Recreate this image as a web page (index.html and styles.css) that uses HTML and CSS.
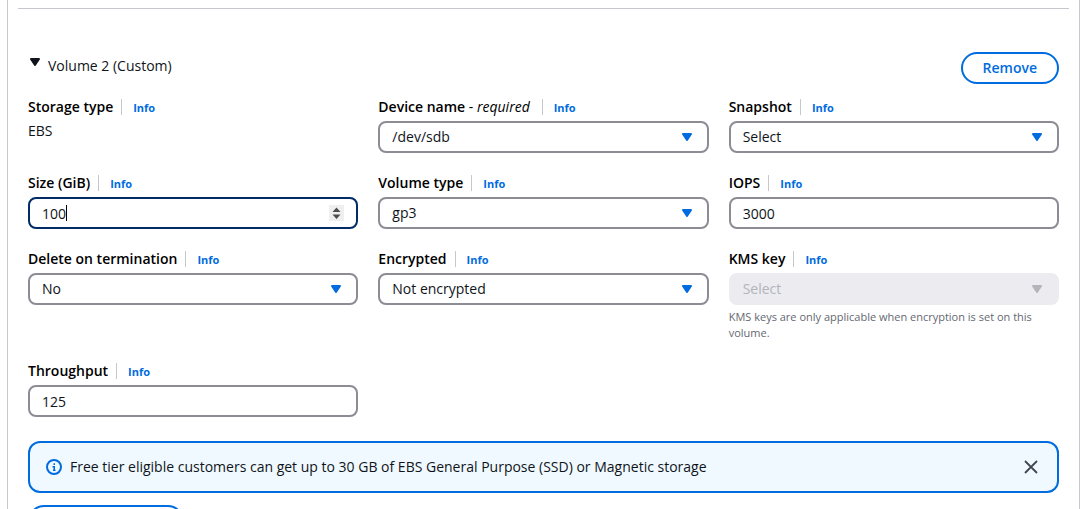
FILE: index.html
```
<!DOCTYPE html>
<html lang="en">
<head>
<meta charset="utf-8">
<meta name="viewport" content="width=device-width, initial-scale=1">
<title>Configure storage</title>
<link rel="stylesheet" href="styles.css">
</head>
<body>
<svg class="sprite" aria-hidden="true">
  <symbol id="caret-down" viewBox="0 0 10 8"><path d="M1 1h8L5 7z" fill="currentColor" stroke="currentColor" stroke-width="2" stroke-linejoin="round"/></symbol>
</svg>
<main class="panel">
  <hr class="rule">
  <section class="volume">
    <header class="volume-header">
      <button class="toggle" type="button" aria-expanded="true"><svg class="caret toggle-caret" aria-hidden="true"><use href="#caret-down"/></svg><span>Volume 2 (Custom)</span></button>
      <button class="pill" type="button">Remove</button>
    </header>
    <form class="grid">
      <div class="field">
        <div class="label-row"><span class="label">Storage type</span><a class="info" href="#">Info</a></div>
        <div class="value">EBS</div>
      </div>
      <div class="field">
        <div class="label-row"><label class="label" for="device">Device name <span class="required">- <em>required</em></span></label><a class="info" href="#">Info</a></div>
        <div class="control"><select class="box" id="device"><option>/dev/sdb</option></select><svg class="caret control-caret" aria-hidden="true"><use href="#caret-down"/></svg></div>
      </div>
      <div class="field">
        <div class="label-row"><label class="label" for="snapshot">Snapshot</label><a class="info" href="#">Info</a></div>
        <div class="control"><select class="box" id="snapshot"><option>Select</option></select><svg class="caret control-caret" aria-hidden="true"><use href="#caret-down"/></svg></div>
      </div>
      <div class="field">
        <div class="label-row"><label class="label" for="size">Size (GiB)</label><a class="info" href="#">Info</a></div>
        <div class="control"><input class="box box-active" id="size" type="number" value="100"><span class="text-cursor"></span>
          <svg class="stepper" viewBox="0 0 15 16" aria-hidden="true"><path fill="#efefef" d="M0 0h15v16H0z"/><path fill="#4d4d4d" d="M7.500 2.500l4 4.500h-8zM7.500 14l4-4.500h-8z"/></svg></div>
      </div>
      <div class="field">
        <div class="label-row"><label class="label" for="type">Volume type</label><a class="info" href="#">Info</a></div>
        <div class="control"><select class="box" id="type"><option>gp3</option></select><svg class="caret control-caret" aria-hidden="true"><use href="#caret-down"/></svg></div>
      </div>
      <div class="field">
        <div class="label-row"><label class="label" for="iops">IOPS</label><a class="info" href="#">Info</a></div>
        <div class="control"><input class="box" id="iops" type="number" value="3000"></div>
      </div>
      <div class="field">
        <div class="label-row"><label class="label" for="delete">Delete on termination</label><a class="info" href="#">Info</a></div>
        <div class="control"><select class="box" id="delete"><option>No</option></select><svg class="caret control-caret" aria-hidden="true"><use href="#caret-down"/></svg></div>
      </div>
      <div class="field">
        <div class="label-row"><label class="label" for="encrypted">Encrypted</label><a class="info" href="#">Info</a></div>
        <div class="control"><select class="box" id="encrypted"><option>Not encrypted</option></select><svg class="caret control-caret" aria-hidden="true"><use href="#caret-down"/></svg></div>
      </div>
      <div class="field">
        <div class="label-row"><label class="label" for="kms">KMS key</label><a class="info" href="#">Info</a></div>
        <div class="control control-disabled"><select class="box" id="kms" disabled aria-describedby="kms-help"><option>Select</option></select><svg class="caret control-caret" aria-hidden="true"><use href="#caret-down"/></svg></div>
        <p class="help" id="kms-help">KMS keys are only applicable when encryption is set on this volume.</p>
      </div>
      <div class="field">
        <div class="label-row"><label class="label" for="throughput">Throughput</label><a class="info" href="#">Info</a></div>
        <div class="control"><input class="box" id="throughput" type="number" value="125"></div>
      </div>
    </form>
    <div class="alert" role="status">
      <svg class="alert-icon" viewBox="0 0 16 16" fill="none" stroke="currentColor" stroke-width="2" aria-hidden="true"><circle cx="8" cy="8" r="7"/><path stroke-width="1.500" d="M8.250 11.500V7.750H6.500M7 11.250h2.500M8.250 4.250v1.750"/></svg>
      <span class="alert-text">Free tier eligible customers can get up to 30 GB of EBS General Purpose (SSD) or Magnetic storage</span>
      <button class="dismiss" type="button" aria-label="Dismiss"><svg class="dismiss-icon" viewBox="0 0 16 16" fill="none" stroke="currentColor" stroke-width="1.800" aria-hidden="true"><path d="M2 2l12 12M14 2L2 14"/></svg></button>
    </div>
    <button class="pill pill-add" type="button" aria-label="Add new volume"></button>
  </section>
</main>
</body>
</html>
```
FILE: styles.css
```
* { box-sizing: border-box; }
html { overflow: hidden; }
body {
  margin: 0;
  height: 100vh;
  overflow: hidden;
  background: #fff;
  color: #0f141a;
  font: 14px/20px "Open Sans", "Noto Sans", sans-serif;
}
button, input, select { font: inherit; color: inherit; }
.sprite { display: none; }
.panel {
  height: 100vh;
  overflow: hidden;
  margin-left: 7px;
  padding: 8px 10px 0;
  border: solid #c6c6cd;
  border-width: 0 1px;
}
.rule { height: 1px; margin: 0; border: 0; background: #c6c6cd; }
.volume { padding: 43px 10px 0; }
.volume-header { display: flex; justify-content: space-between; align-items: flex-start; }
.toggle {
  display: flex;
  gap: 8px;
  margin-top: 4px;
  padding: 0 0 0 2px;
  border: 0;
  background: none;
}
.caret { display: block; width: 10px; height: 8px; }
.toggle-caret { margin-top: 2px; }
.pill {
  height: 32px;
  padding: 0 20px;
  border: 2px solid #006ce0;
  border-radius: 20px;
  background: #fff;
  color: #006ce0;
  font-weight: 600;
}
.grid {
  display: grid;
  grid-template-columns: repeat(3, minmax(0, 1fr));
  gap: 20px;
  margin-top: 13px;
}
.label-row { display: flex; align-items: center; height: 20px; margin-bottom: 4px; white-space: nowrap; }
.label { color: #000; font-weight: 650; }
.required { margin-right: 4px; font-weight: 400; }
.info {
  height: 16px;
  margin-left: 8px;
  padding-left: 11px;
  border-left: 1px solid #c6c6cd;
  color: #006ce0;
  font-size: 11px;
  font-weight: 700;
  line-height: 18px;
  text-decoration: none;
}
.control { position: relative; color: #006ce0; }
.box {
  display: block;
  width: 100%;
  height: 32px;
  padding: 0 12px;
  border: 2px solid #8c8c94;
  border-radius: 8px;
  outline: 0;
  background: #fff;
  color: #0f141a;
  appearance: none;
}
input.box { appearance: textfield; }
.box::-webkit-inner-spin-button { appearance: none; margin: 0; }
.box-active { border-color: #002b66; }
.control-caret { position: absolute; top: 12px; right: 17px; pointer-events: none; }
.control-disabled { color: #b4b4bb; }
.control-disabled .box { border-color: #ebebf0; background: #ebebf0; color: #b4b4bb; opacity: 1; }
.text-cursor { position: absolute; top: 8px; left: 38px; width: 1px; height: 16px; background: #000; }
.stepper { position: absolute; top: 8px; right: 14px; width: 15px; height: 16px; }
.help { margin: 4px 0 0; color: #656871; font-size: 11px; font-weight: 500; line-height: 16px; }
.alert {
  display: flex;
  align-items: center;
  gap: 8px;
  min-height: 52px;
  margin-top: 24px;
  padding: 8px 18px 8px 16px;
  border: 2px solid #006ce0;
  border-radius: 12px;
  background: #f0f9ff;
}
.alert-icon { flex: none; width: 16px; height: 16px; color: #006ce0; }
.alert-text { flex: 1; }
.dismiss { display: block; padding: 0; border: 0; background: none; color: #424650; }
.dismiss-icon { display: block; width: 16px; height: 16px; }
.pill-add { display: block; width: 156px; margin-top: 12px; }
```
